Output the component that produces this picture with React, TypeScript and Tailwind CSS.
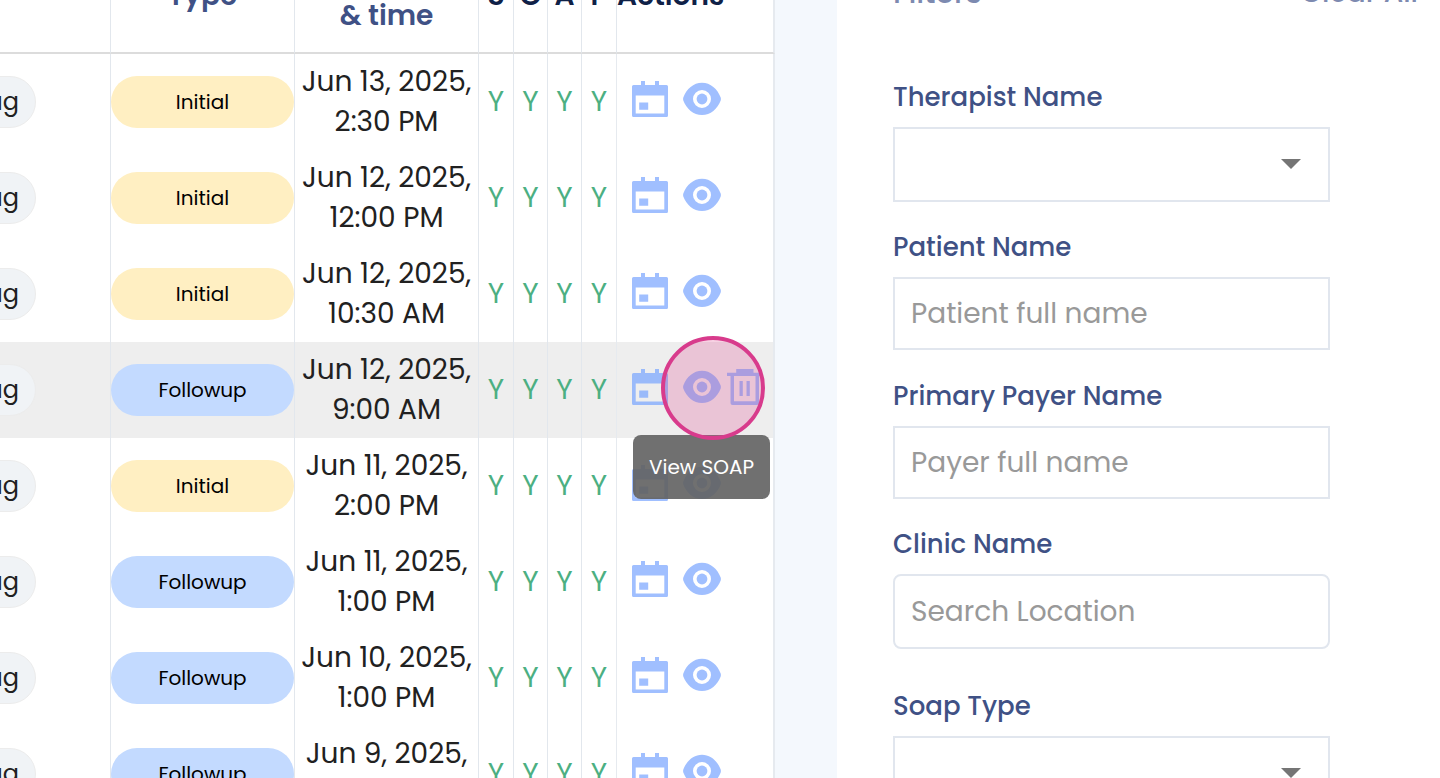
import React from "react";

type Note = { date: string; time: string; type: "Initial" | "Followup"; active?: boolean };

const notes: Note[] = [
  { date: "Jun 13, 2025,", time: "2:30 PM", type: "Initial" },
  { date: "Jun 12, 2025,", time: "12:00 PM", type: "Initial" },
  { date: "Jun 12, 2025,", time: "10:30 AM", type: "Initial" },
  { date: "Jun 12, 2025,", time: "9:00 AM", type: "Followup", active: true },
  { date: "Jun 11, 2025,", time: "2:00 PM", type: "Initial" },
  { date: "Jun 11, 2025,", time: "1:00 PM", type: "Followup" },
  { date: "Jun 10, 2025,", time: "1:00 PM", type: "Followup" },
  { date: "Jun 9, 2025,", time: "1:00 PM", type: "Followup" },
];

const soap = ["S", "O", "A", "P"];

const CalendarIcon = () => (
  <svg width="36" height="36" viewBox="0 0 36 36" fill="currentColor">
    <path
      fillRule="evenodd"
      d="M9 0h4v4h10V0h4v4h7.5Q36 4 36 5.500V34.500Q36 36 34.500 36H1.500Q0 36 0 34.500V5.500Q0 4 1.500 4H9ZM3.700 14.500V32.500H32.300V14.500ZM7.200 21.500h9v7.300h-9Z"
    />
  </svg>
);

const EyeIcon = () => (
  <svg width="38" height="34" viewBox="0 0 38 34" fill="currentColor">
    <path
      fillRule="evenodd"
      d="M19 .8C10.500 .8 3.500 7 .3 15.500Q-.1 17 .3 18.500C3.500 27 10.500 33 19 33S34.500 27 37.700 18.500Q38.100 17 37.700 15.500C34.500 7 27.500 .8 19 .8ZM19 8a9 9 0 1 1 0 18a9 9 0 1 1 0-18Z"
    />
    <circle cx="19" cy="17" r="5.4" />
  </svg>
);

const TrashIcon = () => (
  <svg width="36" height="36" viewBox="0 0 36 36" fill="currentColor">
    <path
      fillRule="evenodd"
      d="M9.200 0H26.500V3.700H35V7H32V34Q32 36 30 36H5.500Q3.500 36 3.500 34V7H0V3.700H9.200ZM7 7V32.300H28.500V7Z"
    />
    <path d="M12.500 12h3.300v15h-3.300ZM19.500 12h3.300v15h-3.300Z" />
  </svg>
);

const NoteRow = ({ note }: { note: Note }) => (
  <tr className={note.active ? "h-24 bg-[#eeeeee]" : "h-24"}>
    <td className="p-0">
      <div className="flex w-9 justify-end">
        <span className="flex h-[52px] shrink-0 items-center rounded-full border border-[#ececec] bg-[#f0f3f6] px-4 text-2xl whitespace-nowrap text-[#212121]">
          No Flag
        </span>
      </div>
    </td>
    <td className="border-l border-[#e2e7ed] p-0">
      <span
        className={
          note.type === "Initial"
            ? "flex h-[52px] items-center justify-center rounded-full bg-[#ffefc2] text-xl text-black"
            : "flex h-[52px] items-center justify-center rounded-full bg-[#c3daff] text-xl text-black"
        }
      >
        {note.type}
      </span>
    </td>
    <td className="border-l border-[#e2e7ed] p-0 text-center text-[28px] leading-10 whitespace-nowrap text-[#212121]">
      {note.date}
      <br />
      {note.time}
    </td>
    {soap.map((s) => (
      <td key={s} className="border-l border-[#e2e7ed] p-0 text-center text-[28px] text-[#4caf82]">
        Y
      </td>
    ))}
    <td className="relative border-r-2 border-l border-[#e6eaef] p-0">
      <div
        className={
          note.active
            ? "flex items-center pb-1.5 pl-[15px] text-[#9abafa]"
            : "flex items-center pb-1.5 pl-[15px] text-[#a0bfff]"
        }
      >
        <button aria-label="Schedule" className="mr-[15px]">
          <CalendarIcon />
        </button>
        <button aria-label="View SOAP">
          <EyeIcon />
        </button>
        {note.active && (
          <button aria-label="Delete" className="ml-[6px]">
            <TrashIcon />
          </button>
        )}
      </div>
      {note.active && (
        <>
          <div
            role="tooltip"
            className="absolute top-[93px] left-4 z-10 flex h-16 w-[137px] items-center justify-center rounded-lg bg-[#616161]/90 text-xl whitespace-nowrap text-white"
          >
            View SOAP
          </div>
          <div className="pointer-events-none absolute -top-[6px] left-11 z-20 size-[104px] rounded-full border-4 border-[#d83b8c] bg-[#e04890]/25" />
        </>
      )}
    </td>
  </tr>
);

const headBorder = "border-b-2 border-l border-b-[#dcdcdc] border-l-[#e2e7ed] p-0 font-semibold";

const NotesTable = () => (
  <table className="-mt-[60px] w-full table-fixed border-separate border-spacing-0 bg-white">
    <colgroup>
      <col />
      <col className="w-[184px]" />
      <col className="w-[184px]" />
      <col className="w-[35px]" />
      <col className="w-[34px]" />
      <col className="w-[34px]" />
      <col className="w-[35px]" />
      <col className="w-[159px]" />
    </colgroup>
    <thead>
      <tr className="h-[114px] text-[28px] leading-10 text-[#3f5185]">
        <th className="border-b-2 border-[#dcdcdc] p-0" aria-label="Flag" />
        <th className={headBorder}>Type</th>
        <th className={headBorder}>
          Date
          <br />& time
        </th>
        {soap.map((s) => (
          <th key={s} className={`${headBorder} text-[#0f2147]`}>
            {s}
          </th>
        ))}
        <th className={`${headBorder} border-r-2 border-r-[#e6eaef] text-left text-[#0f2147]`}>Actions</th>
      </tr>
    </thead>
    <tbody>
      {notes.map((note, i) => (
        <NoteRow key={i} note={note} />
      ))}
    </tbody>
  </table>
);

const labelStyle = "mb-[10px] block text-[26px] leading-10 font-medium text-[#3f5185]";
const boxStyle = "block w-full border-2 border-[#e1e6ee] bg-white px-4 text-[28px] text-[#212121] placeholder:text-[#999999]";

const SelectField = ({ id, label }: { id: string; label: string }) => (
  <div className="mb-[25px]">
    <label htmlFor={id} className={labelStyle}>
      {label}
    </label>
    <div className="relative">
      <select id={id} className={`${boxStyle} h-[75px] appearance-none`} />
      <svg
        className="pointer-events-none absolute top-8 right-[29px]"
        width="20"
        height="10"
        viewBox="0 0 20 10"
        fill="#757575"
      >
        <path d="M0 0H20L10 10Z" />
      </svg>
    </div>
  </div>
);

const Filters = () => (
  <aside className="w-[603px] shrink-0 bg-white pr-[110px] pl-14">
    <div className="-mt-[27px] -mr-[88px] mb-16 flex items-center justify-between leading-10 font-medium text-[#7d8ab0]">
      <h2 className="text-3xl/10">Filters</h2>
      <button className="text-[28px]">Clear All</button>
    </div>
    <SelectField id="therapist" label="Therapist Name" />
    <div className="mb-[26px]">
      <label htmlFor="patient" className={labelStyle}>
        Patient Name
      </label>
      <input id="patient" placeholder="Patient full name" className={`${boxStyle} h-[73px]`} />
    </div>
    <div className="mb-[25px]">
      <label htmlFor="payer" className={labelStyle}>
        Primary Payer Name
      </label>
      <input id="payer" placeholder="Payer full name" className={`${boxStyle} h-[73px]`} />
    </div>
    <div className="mb-[37px]">
      <label htmlFor="clinic" className={labelStyle}>
        Clinic Name
      </label>
      <input id="clinic" placeholder="Search Location" className={`${boxStyle} h-[75px] rounded-lg`} />
    </div>
    <SelectField id="soap-type" label="Soap Type" />
  </aside>
);

export default function App() {
  return (
    <div className="flex h-screen overflow-hidden bg-[#f4f8fd] font-[Poppins,Inter,sans-serif]">
      <main className="mr-[62px] min-w-0 flex-1">
        <NotesTable />
      </main>
      <Filters />
    </div>
  );
}
